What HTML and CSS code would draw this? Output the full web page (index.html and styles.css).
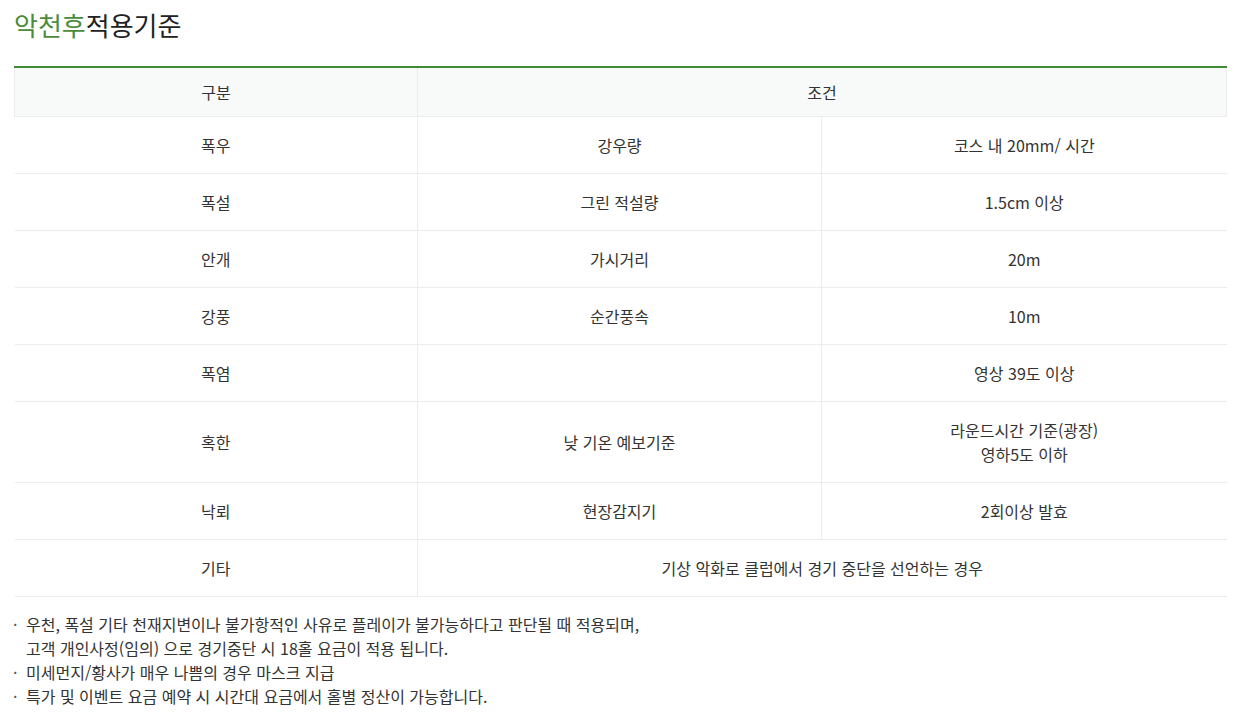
FILE: index.html
```html
<!DOCTYPE html>
<html lang="ko">
<head>
<meta charset="utf-8">
<title>악천후적용기준</title>
<link rel="stylesheet" href="styles.css">
</head>
<body>
<div class="wrap">
  <h2 class="title"><span class="accent">악천후</span>적용기준</h2>
  <table class="tbl">
    <colgroup><col class="c1"><col class="c2"><col class="c3"></colgroup>
    <thead>
      <tr><th>구분</th><th colspan="2">조건</th></tr>
    </thead>
    <tbody>
      <tr><td>폭우</td><td>강우량</td><td>코스 내 20mm/ 시간</td></tr>
      <tr><td>폭설</td><td>그린 적설량</td><td>1.5cm 이상</td></tr>
      <tr><td>안개</td><td>가시거리</td><td>20m</td></tr>
      <tr><td>강풍</td><td>순간풍속</td><td>10m</td></tr>
      <tr><td>폭염</td><td></td><td>영상 39도 이상</td></tr>
      <tr class="tall"><td>혹한</td><td>낮 기온 예보기준</td><td>라운드시간 기준(광장)<br>영하5도 이하</td></tr>
      <tr><td>낙뢰</td><td>현장감지기</td><td>2회이상 발효</td></tr>
      <tr><td>기타</td><td colspan="2">기상 악화로 클럽에서 경기 중단을 선언하는 경우</td></tr>
    </tbody>
  </table>
  <ul class="notes">
    <li>우천, 폭설 기타 천재지변이나 불가항적인 사유로 플레이가 불가능하다고 판단될 때 적용되며,<br>고객 개인사정(임의) 으로 경기중단 시 18홀 요금이 적용 됩니다.</li>
    <li>미세먼지/황사가 매우 나쁨의 경우 마스크 지급</li>
    <li>특가 및 이벤트 요금 예약 시 시간대 요금에서 홀별 정산이 가능합니다.</li>
  </ul>
</div>
</body>
</html>
```

FILE: styles.css
```css
html, body {
  margin: 0;
  padding: 0;
  background: #fff;
}
body {
  font-family: "Noto Sans CJK KR", "Noto Sans", sans-serif;
  color: #333;
}
.wrap {
  padding: 0 8px 0 14px;
}
.title {
  margin: 0;
  padding-top: 6px;
  height: 66px;
  box-sizing: border-box;
  font-size: 26px;
  font-weight: 400;
  line-height: 38px;
  color: #222;
}
.accent {
  color: #4a8c3a;
}
.tbl {
  width: 1212px;
  border-collapse: collapse;
  table-layout: fixed;
  border-top: 2px solid #3f8c35;
  font-size: 16px;
  color: #333;
}
.c1 { width: 403px; }
.c2 { width: 404px; }
.c3 { width: 405px; }
.tbl th {
  height: 48px;
  font-weight: 400;
  background: #f8f9f9;
  border: 1px solid #ececec;
  border-top: 0;
  text-align: center;
  padding: 0;
}
.tbl td {
  height: 56px;
  text-align: center;
  padding: 0;
  border-bottom: 1px solid #ececec;
  border-left: 1px solid #ececec;
  line-height: 24px;
}
.tbl td:first-child {
  border-left: 0;
}
.tbl tr.tall td {
  height: 80px;
}
.notes {
  list-style: none;
  margin: 15px 0 0;
  padding: 0;
  font-size: 16px;
  line-height: 24px;
  color: #333;
}
.notes li {
  position: relative;
  padding-left: 12px;
}
.notes li::before {
  content: "·";
  position: absolute;
  left: -1px;
  top: 0;
  color: #555;
}
```
